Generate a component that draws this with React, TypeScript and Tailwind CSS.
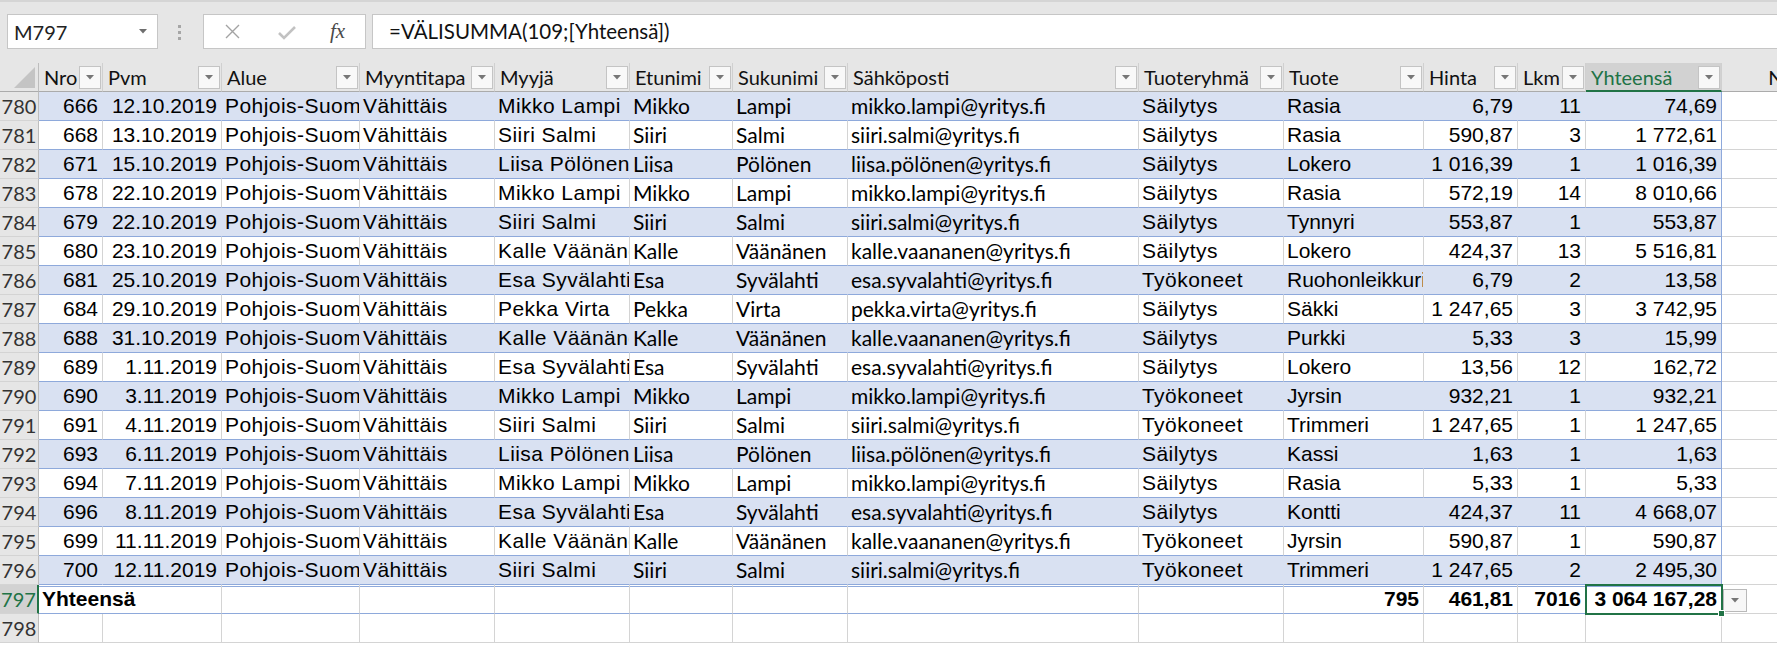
import clsx from "clsx";

const ARIAL = "font-['Liberation_Sans',Arial,sans-serif]";
const CAL = "font-['Lato',sans-serif]";

type Col = { label: string; w: string; cal?: boolean; right?: boolean; track?: boolean };

const COLS: Col[] = [
  { label: "Nro", w: "w-[64px]", right: true },
  { label: "Pvm", w: "w-[119px]", right: true },
  { label: "Alue", w: "w-[138px]", track: true },
  { label: "Myyntitapa", w: "w-[135px]", track: true },
  { label: "Myyjä", w: "w-[135px]", track: true },
  { label: "Etunimi", w: "w-[103px]", cal: true },
  { label: "Sukunimi", w: "w-[115px]", cal: true },
  { label: "Sähköposti", w: "w-[291px]", cal: true },
  { label: "Tuoteryhmä", w: "w-[145px]", track: true },
  { label: "Tuote", w: "w-[140px]" },
  { label: "Hinta", w: "w-[94px]", right: true },
  { label: "Lkm", w: "w-[68px]", right: true },
  { label: "Yhteensä", w: "w-[136px]", right: true },
];

const PEOPLE: Record<string, [string, string, string]> = {
  "Mikko Lampi": ["Mikko", "Lampi", "mikko.lampi@yritys.fi"],
  "Siiri Salmi": ["Siiri", "Salmi", "siiri.salmi@yritys.fi"],
  "Liisa Pölönen": ["Liisa", "Pölönen", "liisa.pölönen@yritys.fi"],
  "Kalle Väänänen": ["Kalle", "Väänänen", "kalle.vaananen@yritys.fi"],
  "Esa Syvälahti": ["Esa", "Syvälahti", "esa.syvalahti@yritys.fi"],
  "Pekka Virta": ["Pekka", "Virta", "pekka.virta@yritys.fi"],
};

// nro, pvm, myyjä, tuoteryhmä, tuote, hinta, lkm, yhteensä
const ROWS: [string, string, string, string, string, string, string, string][] = [
  ["666", "12.10.2019", "Mikko Lampi", "Säilytys", "Rasia", "6,79", "11", "74,69"],
  ["668", "13.10.2019", "Siiri Salmi", "Säilytys", "Rasia", "590,87", "3", "1 772,61"],
  ["671", "15.10.2019", "Liisa Pölönen", "Säilytys", "Lokero", "1 016,39", "1", "1 016,39"],
  ["678", "22.10.2019", "Mikko Lampi", "Säilytys", "Rasia", "572,19", "14", "8 010,66"],
  ["679", "22.10.2019", "Siiri Salmi", "Säilytys", "Tynnyri", "553,87", "1", "553,87"],
  ["680", "23.10.2019", "Kalle Väänänen", "Säilytys", "Lokero", "424,37", "13", "5 516,81"],
  ["681", "25.10.2019", "Esa Syvälahti", "Työkoneet", "Ruohonleikkuri", "6,79", "2", "13,58"],
  ["684", "29.10.2019", "Pekka Virta", "Säilytys", "Säkki", "1 247,65", "3", "3 742,95"],
  ["688", "31.10.2019", "Kalle Väänänen", "Säilytys", "Purkki", "5,33", "3", "15,99"],
  ["689", "1.11.2019", "Esa Syvälahti", "Säilytys", "Lokero", "13,56", "12", "162,72"],
  ["690", "3.11.2019", "Mikko Lampi", "Työkoneet", "Jyrsin", "932,21", "1", "932,21"],
  ["691", "4.11.2019", "Siiri Salmi", "Työkoneet", "Trimmeri", "1 247,65", "1", "1 247,65"],
  ["693", "6.11.2019", "Liisa Pölönen", "Säilytys", "Kassi", "1,63", "1", "1,63"],
  ["694", "7.11.2019", "Mikko Lampi", "Säilytys", "Rasia", "5,33", "1", "5,33"],
  ["696", "8.11.2019", "Esa Syvälahti", "Säilytys", "Kontti", "424,37", "11", "4 668,07"],
  ["699", "11.11.2019", "Kalle Väänänen", "Työkoneet", "Jyrsin", "590,87", "1", "590,87"],
  ["700", "12.11.2019", "Siiri Salmi", "Työkoneet", "Trimmeri", "1 247,65", "2", "2 495,30"],
];

function Arrow({ color = "#767676" }: { color?: string }) {
  return (
    <svg width="8" height="5" viewBox="0 0 8 5">
      <path d="M0 0h8L4 4.5z" fill={color} />
    </svg>
  );
}

function FilterButton() {
  return (
    <div className="mt-[3px] mr-[1px] flex h-[23px] w-[22px] shrink-0 items-center justify-center border border-[#c4c4c4] bg-[#f8f8f8]">
      <Arrow />
    </div>
  );
}

function RowHead({ n, active }: { n: number; active?: boolean }) {
  return (
    <div
      className={clsx(
        "h-full w-[39px] shrink-0 border-b border-b-[#d4d4d4] text-center text-[20px] leading-[28px]",
        CAL,
        active
          ? "border-r-2 border-r-[#217346] bg-[#d2d2d2] text-[#217346]"
          : "border-r border-r-[#bdbdbd] bg-[#e6e6e6] text-[#333]"
      )}
    >
      {n}
    </div>
  );
}

function FormulaBar() {
  return (
    <div className="h-[63px] bg-[#e6e6e6]">
      <div className="h-[2px] bg-[#d5d5d5]" />
      <div className="flex items-start pt-[12px]">
        <div className="ml-[7px] flex h-[35px] w-[151px] items-center justify-between border border-[#c6c6c6] bg-white pl-[6px] pr-[10px]">
          <span className={clsx(CAL, "text-[20px] text-[#222]")}>M797</span>
          <Arrow color="#6e6e6e" />
        </div>
        <div className="ml-[20px] mt-[11px] flex flex-col gap-[3px]">
          <div className="h-[3px] w-[3px] bg-[#a6a6a6]" />
          <div className="h-[3px] w-[3px] bg-[#a6a6a6]" />
          <div className="h-[3px] w-[3px] bg-[#a6a6a6]" />
        </div>
        <div className="ml-[22px] flex h-[35px] w-[163px] items-center border border-[#c6c6c6] bg-white pl-[20px]">
          <svg width="17" height="17" viewBox="0 0 17 17">
            <path d="M2 2l13 13M15 2L2 15" stroke="#a3a3a3" strokeWidth="1.4" />
          </svg>
          <svg className="ml-[36px]" width="20" height="16" viewBox="0 0 20 16">
            <path d="M2 9l5 5L18 3" stroke="#c2c2c2" strokeWidth="2.6" fill="none" />
          </svg>
          <span className="ml-[33px] font-['Liberation_Serif',serif] text-[21px] italic text-[#4a4a4a]">
            fx
          </span>
        </div>
        <div className="ml-[6px] flex h-[35px] flex-1 items-center border border-r-0 border-[#c6c6c6] bg-white pl-[16px]">
          <span className={clsx(CAL, "text-[20.5px] text-[#111]")}>=VÄLISUMMA(109;[Yhteensä])</span>
        </div>
      </div>
    </div>
  );
}

function HeaderRow() {
  return (
    <div className="flex h-[29px] bg-[#e6e6e6]">
      <div className="flex h-full w-[39px] shrink-0 items-end justify-end border-b border-r border-b-[#ababab] border-r-[#bdbdbd] pb-[3px] pr-[3px]">
        <svg width="21" height="21" viewBox="0 0 21 21">
          <path d="M21 0V21H0z" fill="#c4c4c4" />
        </svg>
      </div>
      {COLS.map((c, i) => {
        const sel = i === COLS.length - 1;
        return (
          <div
            key={c.label}
            className={clsx(
              c.w,
              "flex h-full shrink-0 border-r border-r-[#d0d0d0]",
              sel ? "border-b-2 border-b-[#217346] bg-[#d2d2d2]" : "border-b border-b-[#ababab]"
            )}
          >
            <span
              className={clsx(
                CAL,
                "flex-1 overflow-hidden whitespace-nowrap pl-[5px] text-[20px] leading-[28px]",
                sel ? "text-[#217346]" : "text-[#111]"
              )}
            >
              {c.label}
            </span>
            <FilterButton />
          </div>
        );
      })}
      <div className="h-full w-[108px] shrink-0 border-b border-b-[#ababab] text-center">
        <span className={clsx(CAL, "text-[20px] leading-[28px] text-[#111]")}>N</span>
      </div>
    </div>
  );
}

function DataRow({ r, idx }: { r: (typeof ROWS)[number]; idx: number }) {
  const band = idx % 2 === 0;
  const [nro, pvm, myyja, ryhma, tuote, hinta, lkm, yht] = r;
  const [etu, suku, email] = PEOPLE[myyja];
  const values = [nro, pvm, "Pohjois-Suomi", "Vähittäis", myyja, etu, suku, email, ryhma, tuote, hinta, lkm, yht];
  return (
    <div className="flex h-[29px]">
      <RowHead n={780 + idx} />
      {COLS.map((c, i) => {
        const last = i === COLS.length - 1;
        return (
          <div
            key={c.label}
            className={clsx(
              c.w,
              "h-full shrink-0 overflow-hidden whitespace-nowrap border-b border-r border-b-[#8ea9db] leading-[28px] text-black",
              c.cal ? clsx(CAL, "text-[21px]") : clsx(ARIAL, "text-[21px]"),
              c.track && "tracking-[0.45px]",
              band ? "bg-[#d9e1f2]" : "bg-white",
              last ? "border-r-[#8ea9db]" : band ? "border-r-[#d9e1f2]" : "border-r-[#d4d4d4]",
              c.right ? "pr-[4px] text-right" : "pl-[3px]"
            )}
          >
            {values[i]}
          </div>
        );
      })}
      <div className="h-full w-[108px] shrink-0 border-b border-b-[#d4d4d4] bg-white" />
    </div>
  );
}

function TotalRow() {
  const cell =
    "h-full shrink-0 whitespace-nowrap border-b border-b-[#8ea9db] bg-white leading-[28px] text-[21px] font-bold text-black shadow-[inset_0_1px_0_#fff,inset_0_2px_0_#8ea9db]";
  const vals: Record<number, string> = { 9: "795", 10: "461,81", 11: "7016", 12: "3 064 167,28" };
  return (
    <div className="flex h-[29px]">
      <RowHead n={797} active />
      {COLS.map((c, i) => {
        const last = i === COLS.length - 1;
        if (i === 0) {
          return (
            <div key={c.label} className={clsx(c.w, cell, ARIAL, "relative z-10 overflow-visible pl-[3px]")}>
              Yhteensä
            </div>
          );
        }
        return (
          <div
            key={c.label}
            className={clsx(
              c.w,
              cell,
              ARIAL,
              "border-r text-right pr-[4px]",
              last ? "relative border-r-[#8ea9db]" : "overflow-hidden border-r-[#d4d4d4]"
            )}
          >
            {vals[i] ?? ""}
            {last && (
              <>
                <div className="absolute -left-[1px] -top-[1px] h-[31px] w-[138px] border-2 border-[#217346]" />
                <div className="absolute -right-[4px] -bottom-[4px] h-[7px] w-[7px] border border-white bg-[#217346]" />
              </>
            )}
          </div>
        );
      })}
      <div className="h-full w-[108px] shrink-0 border-b border-b-[#d4d4d4] bg-white pl-[1px] pt-[4px]">
        <div className="flex h-[23px] w-[24px] items-center justify-center border border-[#b9b9b9] bg-[#f7f7f7]">
          <Arrow />
        </div>
      </div>
    </div>
  );
}

function EmptyRow({ n }: { n: number }) {
  return (
    <div className="flex h-[29px]">
      <RowHead n={n} />
      {COLS.map((c) => (
        <div key={c.label} className={clsx(c.w, "h-full shrink-0 border-b border-r border-[#d4d4d4] bg-white")} />
      ))}
      <div className="h-full w-[108px] shrink-0 border-b border-b-[#d4d4d4] bg-white" />
    </div>
  );
}

export default function App() {
  return (
    <div className="h-[645px] w-[1777px] overflow-hidden bg-white">
      <FormulaBar />
      <HeaderRow />
      {ROWS.map((r, i) => (
        <DataRow key={r[0]} r={r} idx={i} />
      ))}
      <TotalRow />
      <EmptyRow n={798} />
    </div>
  );
}
